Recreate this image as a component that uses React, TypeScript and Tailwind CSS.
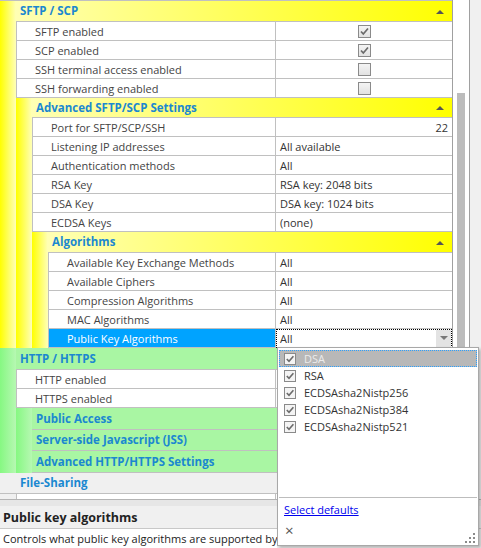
import React from 'react';

type Tone = 'y' | 'g';

const stripeBg: Record<Tone, string> = {
    y: 'bg-[linear-gradient(to_right,#ffff00,#ffffb8)]',
    g: 'bg-[linear-gradient(to_right,#86f882,#b6f8b2)]',
};

const headBg: Record<Tone, string> = {
    y: 'bg-[linear-gradient(to_right,#ffffb4,#ffff00)]',
    g: 'bg-[#a9f6a3]',
};

const headH: Record<number, string> = {
    20: 'h-[20px]',
    21: 'h-[21px]',
    22: 'h-[22px]',
};

function UpArrow() {
    return (
        <svg width="8" height="5" viewBox="0 0 8 5" className="ml-auto mr-[8px]">
            <path d="M0 5 L4 1 L8 5 Z" fill="#555" />
        </svg>
    );
}

function Header({ title, tone, h, arrow = true }: { title: string; tone: Tone; h: number; arrow?: boolean }) {
    return (
        <div className={`${headBg[tone]} ${headH[h]} shrink-0 flex items-center border-b border-[#c0c0c0] pl-[4px]`}>
            <span className="text-[#1b88d0] font-bold text-[11.5px]">{title}</span>
            {arrow && <UpArrow />}
        </div>
    );
}

function Check({ on }: { on: boolean }) {
    return (
        <div className="w-[13px] h-[13px] border border-[#8a8a8a] bg-[linear-gradient(#f4f4f4,#e2e2e2)] flex items-center justify-center">
            {on && (
                <svg width="11" height="11" viewBox="0 0 11 11">
                    <path d="M2 5.5 L4.3 8 L9 2.5" stroke="#6b6b6b" strokeWidth="1.7" fill="none" />
                </svg>
            )}
        </div>
    );
}

interface RowProps {
    label: string;
    value?: string;
    check?: boolean;
    right?: boolean;
    selected?: boolean;
}

function Row({ label, value, check, right, selected }: RowProps) {
    return (
        <div className="h-[19px] shrink-0 flex border-b border-[#c0c0c0]">
            <div
                className={`flex-1 min-w-0 flex items-center pl-[18px] whitespace-nowrap overflow-hidden border-l border-[#c0c0c0] ${
                    selected ? 'bg-[#00a3ff] text-white' : 'bg-white text-[#444]'
                }`}
            >
                {label}
            </div>
            {selected ? (
                <div className="w-[177px] shrink-0 bg-white border-l border-[#c0c0c0] -mb-px">
                    <div className="h-[19px] border border-dotted border-black flex items-center pl-[3px] text-[#333]">
                        {value}
                        <div className="ml-auto h-[17px] w-[15px] bg-[#e3e3e3] flex items-center justify-center">
                            <svg width="8" height="5" viewBox="0 0 8 5">
                                <path d="M0 0 L8 0 L4 4 Z" fill="#777" />
                            </svg>
                        </div>
                    </div>
                </div>
            ) : (
                <div
                    className={`w-[177px] shrink-0 bg-white border-l border-[#c0c0c0] flex items-center text-[#333] ${
                        check !== undefined ? 'justify-center' : right ? 'justify-end pr-[4px]' : 'pl-[4px]'
                    }`}
                >
                    {check !== undefined ? <Check on={check} /> : value}
                </div>
            )}
        </div>
    );
}

function Section({ tone, title, h, children }: { tone: Tone; title: string; h: number; children?: React.ReactNode }) {
    return (
        <div className="flex shrink-0">
            <div className={`w-[16px] shrink-0 ${stripeBg[tone]}`} />
            <div className="flex-1 min-w-0 flex flex-col">
                <Header title={title} tone={tone} h={h} arrow={!!children} />
                {children}
            </div>
        </div>
    );
}

const algoItems = ['DSA', 'RSA', 'ECDSAsha2Nistp256', 'ECDSAsha2Nistp384', 'ECDSAsha2Nistp521'];

function Popup() {
    return (
        <div className="absolute left-[277px] top-[347px] w-[202px] h-[199px] bg-white border border-[#a8a8a8] shadow-[2px_2px_3px_rgba(0,0,0,0.25)] flex flex-col">
            <div className="h-[148px] mx-px mt-[2px] shrink-0 flex flex-col border-b border-[#bdbdbd]">
                {algoItems.map((name, i) => (
                    <div
                        key={name}
                        className={`h-[17px] flex items-center pl-[5px] gap-[8px] ${
                            i === 0 ? 'bg-[#b8b8b8] outline outline-1 outline-dotted outline-[#2aa0ff] -outline-offset-1 text-[#ececec]' : 'text-[#333]'
                        }`}
                    >
                        <div className="w-[12px] h-[12px] border border-[#8a8a8a] bg-[#f4f4f4] flex items-center justify-center">
                            <svg width="10" height="10" viewBox="0 0 10 10">
                                <path d="M1.8 5 L4 7.3 L8.4 2.2" stroke="#6b6b6b" strokeWidth="1.6" fill="none" />
                            </svg>
                        </div>
                        {name}
                    </div>
                ))}
            </div>
            <div className="pl-[6px] h-[23px] shrink-0 flex items-center">
                <span className="text-[#0000ee] underline">Select defaults</span>
            </div>
            <div className="flex items-start justify-between pl-[7px] pr-[3px] pt-[2px] flex-1">
                <span className="text-[#555] text-[15px] leading-none">×</span>
                <svg width="10" height="10" viewBox="0 0 10 10" className="self-end mb-[2px]">
                    <g fill="#8a8a8a">
                        <rect x="8" y="0" width="2" height="2" />
                        <rect x="4" y="4" width="2" height="2" />
                        <rect x="8" y="4" width="2" height="2" />
                        <rect x="0" y="8" width="2" height="2" />
                        <rect x="4" y="8" width="2" height="2" />
                        <rect x="8" y="8" width="2" height="2" />
                    </g>
                </svg>
            </div>
        </div>
    );
}

export default function App() {
    return (
        <div className="relative w-[481px] h-[548px] overflow-hidden bg-[#f0f0f0] font-['Open_Sans',sans-serif] text-[11px] leading-none">
            <div className="flex h-[499px]">
                <div className="w-[452px] flex flex-col border-t border-[#c0c0c0] overflow-hidden">
                    <Section tone="y" title="SFTP / SCP" h={21}>
                        <Row label="SFTP enabled" check={true} />
                        <Row label="SCP enabled" check={true} />
                        <Row label="SSH terminal access enabled" check={false} />
                        <Row label="SSH forwarding enabled" check={false} />
                        <Section tone="y" title="Advanced SFTP/SCP Settings" h={20}>
                            <Row label="Port for SFTP/SCP/SSH" value="22" right />
                            <Row label="Listening IP addresses" value="All available" />
                            <Row label="Authentication methods" value="All" />
                            <Row label="RSA Key" value="RSA key: 2048 bits" />
                            <Row label="DSA Key" value="DSA key: 1024 bits" />
                            <Row label="ECDSA Keys" value="(none)" />
                            <Section tone="y" title="Algorithms" h={21}>
                                <Row label="Available Key Exchange Methods" value="All" />
                                <Row label="Available Ciphers" value="All" />
                                <Row label="Compression Algorithms" value="All" />
                                <Row label="MAC Algorithms" value="All" />
                                <Row label="Public Key Algorithms" value="All" selected />
                            </Section>
                        </Section>
                    </Section>
                    <Section tone="g" title="HTTP / HTTPS" h={22}>
                        <Row label="HTTP enabled" check={true} />
                        <Row label="HTTPS enabled" check={true} />
                        <Section tone="g" title="Public Access" h={22} />
                        <Section tone="g" title="Server-side Javascript (JSS)" h={21} />
                        <Section tone="g" title="Advanced HTTP/HTTPS Settings" h={22} />
                    </Section>
                    <div className="h-[21px] shrink-0 flex items-center pl-[20px] border-b border-[#c0c0c0] bg-[#f0f0f0]">
                        <span className="text-[#1b88d0] font-bold text-[11.5px]">File-Sharing</span>
                    </div>
                    <div className="flex-1 flex pl-[16px]">
                        <div className="w-[260px] bg-white border-l border-r border-[#c0c0c0]" />
                        <div className="flex-1 bg-white" />
                    </div>
                </div>
                <div className="w-px bg-[#a0a0a0]" />
                <div className="w-[16px] bg-white flex flex-col pt-[93px] px-[4px]">
                    <div className="flex-1 bg-[#bcbcbc]" />
                </div>
                <div className="w-px bg-[#a0a0a0]" />
                <div className="flex-1 bg-[#f0f0f0]" />
            </div>
            <div className="border-t border-[#b4b4b4] h-[49px] flex flex-col">
                <div className="h-[6px] bg-[#e6e6e6]" />
                <div className="h-[23px] flex items-center pl-[3px] pt-[2px] bg-[#f0f0f0] border-b border-[#c8c8c8]">
                    <span className="font-bold text-[12.5px] text-[#222]">Public key algorithms</span>
                </div>
                <div className="flex-1 w-[277px] overflow-hidden flex items-center pl-[3px] bg-white text-[#222] whitespace-nowrap">
                    Controls what public key algorithms are supported by the server.
                </div>
            </div>
            <Popup />
        </div>
    );
}
